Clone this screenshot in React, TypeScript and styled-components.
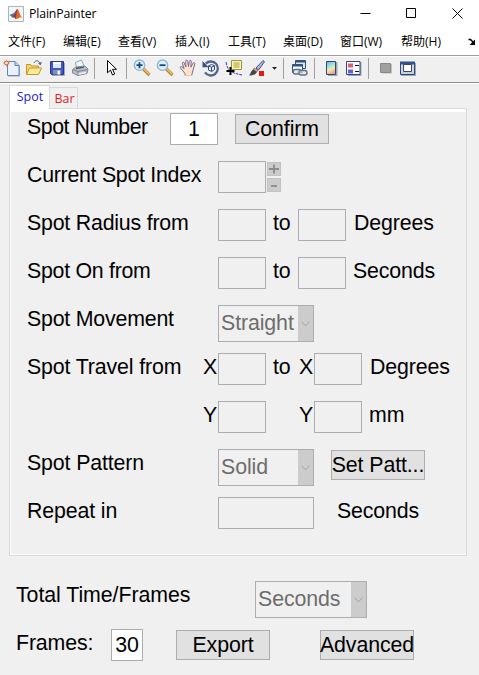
import React from "react";
import styled, { createGlobalStyle, css } from "styled-components";

const GlobalStyle = createGlobalStyle`
  *, *::before, *::after { box-sizing: border-box; }
  html, body { margin: 0; padding: 0; background: #f0f0f0; overflow: hidden; }
`;

const Window = styled.main`
  width: 479px;
  height: 675px;
  background: #f0f0f0;
  color: #000;
  font-family: "Liberation Sans", Arial, sans-serif;
  font-size: 21.33px;
  line-height: 24px;
  overflow: hidden;
`;

const TitleBar = styled.header`
  display: flex;
  align-items: center;
  height: 27px;
  padding-left: 8px;
  background: #fff;
`;

const Title = styled.span`
  flex: 1;
  margin-left: 5px;
  font: 12.3px/16px "Open Sans", "Noto Sans", sans-serif;
  letter-spacing: -0.15px;
  padding-top: 1px;
`;

const WindowControls = styled.div`
  display: flex;
  gap: 35px;
  margin-right: 16px;
`;

const MenuBar = styled.nav`
  display: flex;
  align-items: center;
  height: 28px;
  padding: 2px 0 0 8px;
  background: #fff;
  font: 12px/18px "Open Sans", "Noto Sans CJK SC", sans-serif;
`;

const MenuItem = styled.span<{ $w: number }>`
  width: ${(p) => p.$w}px;
  white-space: nowrap;
`;

const ToolBar = styled.div`
  display: flex;
  align-items: center;
  height: 28px;
  padding-bottom: 2px;
  border-top: 1px solid #a0a0a0;
  border-bottom: 1px solid #8f8f8f;
  background: #f0f0f0;
  box-shadow: inset 0 1px #fff;
`;

const Tool = styled.span<{ $gap?: number; $w?: number }>`
  flex: none;
  display: flex;
  width: ${(p) => p.$w ?? 18}px;
  height: 18px;
  margin-left: ${(p) => p.$gap ?? 5}px;
`;

const Separator = styled.i<{ $gap: number }>`
  flex: none;
  width: 1px;
  height: 21px;
  margin: 1px 0 0 ${(p) => p.$gap}px;
  background: #a0a0a0;
`;

const TabStrip = styled.div`
  display: flex;
  align-items: flex-end;
  height: 25px;
  padding-left: 9px;
  border-top: 1px solid #fff;
  font: 12.5px/16px "Open Sans", "Noto Sans", sans-serif;
`;

const Tab = styled.div<{ $active?: boolean }>`
  border: 1px solid #d9d9d9;
  border-bottom: 0;
  text-align: center;
  ${(p) =>
    p.$active
      ? css`
          z-index: 1;
          width: 41px;
          height: 24px;
          margin-bottom: -1px;
          padding: 3px 0 0 1px;
          background: #fff;
          color: #1d1dc4;
        `
      : css`
          width: 28px;
          height: 21px;
          padding: 3px 0 0 2px;
          border-left: 0;
          color: #e01f1f;
        `}
`;

const Panel = styled.section`
  width: 458px;
  height: 448px;
  margin-left: 9px;
  padding: 1px 0 0 8px;
  border: 1px solid #d9d9d9;
  box-shadow: inset 0 3px #fff, inset 1px 0 #fff, inset 0 -1px #fff;
`;

const Rows = styled.div`
  padding-top: 3px;
`;

const Footer = styled.footer`
  padding: 25px 0 0 7px;
`;

const Row = styled.div`
  display: flex;
  align-items: flex-start;
  height: 48px;
  padding-left: 9px;
`;

const Label = styled.span<{ $w: number; $gap?: number; $tracking?: number }>`
  flex: none;
  width: ${(p) => p.$w}px;
  margin-left: ${(p) => p.$gap ?? 0}px;
  padding-top: 2px;
  letter-spacing: ${(p) => p.$tracking ?? -0.13}px;
  white-space: nowrap;
`;

const Field = styled.div<{ $w?: number; $gap?: number; $active?: boolean }>`
  flex: none;
  width: ${(p) => p.$w ?? 48}px;
  height: 32px;
  margin-left: ${(p) => p.$gap ?? 0}px;
  padding-top: 3px;
  border: 1px solid #abadb3;
  background: ${(p) => (p.$active ? "#fff" : "#f0f0f0")};
  text-align: center;
`;

const Button = styled.button<{ $gap: number }>`
  flex: none;
  width: 94px;
  height: 30px;
  margin: 1px 0 0 ${(p) => p.$gap}px;
  padding: 1px 0 0;
  border: 1px solid #adadad;
  background: #e1e1e1;
  color: #000;
  font: inherit;
  line-height: 26px;
  letter-spacing: -0.1px;
  white-space: nowrap;
  display: flex;
  justify-content: center;
`;

const SelectBox = styled.div<{ $w?: number }>`
  flex: none;
  display: flex;
  justify-content: space-between;
  width: ${(p) => p.$w ?? 96}px;
  height: 37px;
  padding-left: 2px;
  border: 1px solid #abadb3;
  color: #6d6d6d;
  line-height: 34px;
  letter-spacing: -0.1px;
`;

const SelectArrow = styled.span`
  display: flex;
  align-items: center;
  justify-content: center;
  width: 15px;
  background: #ccc;
`;

const Stepper = styled.div`
  display: grid;
  gap: 2px;
  margin: 1px 0 0 1px;
`;

const Step = styled.span`
  display: flex;
  width: 14px;
  height: 14px;
  background: #ccc;
  border: 1px solid #c2c2c2;
`;

function Select({ value, width }: { value: string; width?: number }) {
  return (
    <SelectBox $w={width}>
      <span>{value}</span>
      <SelectArrow>
        <svg width="9" height="6" viewBox="0 0 9 6" fill="none" stroke="#a2a2a2">
          <path d="M.5 .8 4.5 4.7 8.5 .8" />
        </svg>
      </SelectArrow>
    </SelectBox>
  );
}

const Svg = ({ children, w = 18 }: { children: React.ReactNode; w?: number }) => (
  <svg width={w} height="18" viewBox={`0 0 ${w} 18`} fill="none">
    {children}
  </svg>
);

const MatlabIcon = () => (
  <svg width="16" height="16" viewBox="0 0 16 16">
    <path d="M.5 .5h15v15H.5z" fill="#f3f5f6" stroke="#a9b5bd" />
    <path d="M1.5 9 6 7l3-4v6l-4 3z" fill="#3f7fae" />
    <path d="M4.5 10.5 7 7.5l2.3-4.8 1.2 2v7L7.2 13 6 10.7z" fill="#a33322" />
    <path d="M9.3 2.7c1.6 1.6 2.4 6 5 9.2-1.5-1-2.7-1-3.8.4l-2.9 1C8.5 10 8.6 6 9.3 2.7z" fill="#e2682a" />
  </svg>
);

const NewIcon = () => (
  <Svg>
    <path d="M5 3h8l4 4v10.5H5z" fill="#9fb0cc" />
    <path d="M4.5 2.5h7.5l4 4v10h-11.5z" fill="#eaf3fc" stroke="#6684b8" />
    <path d="M12 2.5v4h4" fill="#bdd3f0" stroke="#6684b8" />
    <path d="M3.5 .5v7M0 4h7M1.2 1.7l4.7 4.7M5.9 1.7 1.2 6.4" stroke="#e8a58a" />
    <circle cx="3.5" cy="4" r="1.9" fill="#fff0dc" stroke="#d4552e" />
  </Svg>
);

const OpenIcon = () => (
  <Svg>
    <path d="M1.5 15.5v-10h4l1 1.5h7v3" fill="#f7d468" stroke="#c3952e" />
    <path d="m1.5 15.5 3-6.5h12l-3 6.5z" fill="#ffed96" stroke="#c3952e" />
    <path d="M9 4c1-3 5-3 6 .5" stroke="#526b88" />
    <path d="m13 4 4-1-1.5 3.5z" fill="#526b88" />
  </Svg>
);

const SaveIcon = () => (
  <Svg>
    <path d="M2.5 2.5h13v13h-12l-1-1z" fill="#4356c3" stroke="#28358b" />
    <path d="M5 3h8v6H5z" fill="#d9ebfa" />
    <path d="M5 3h8v2H5z" fill="#fff" />
    <path d="M5 11h8v4.5H5z" fill="#8290b4" />
    <path d="M9.5 11.5h2.5v4H9.5z" fill="#f2f5ff" />
    <path d="M16.5 4v12.5H4" stroke="#9ba9c7" />
  </Svg>
);

const PrintIcon = () => (
  <Svg>
    <path d="M5.5 9 4.5 3.5l6-2.5 3 7" fill="#edf5fb" stroke="#8ea5b8" />
    <path d="M1.5 10.5 5 8l9-1 3 3-1 4.5-9 2-5.5-2.5z" fill="#b9bec7" stroke="#858c98" />
    <path d="m2 10.5 5 2 9.5-2M7 12.5v4" stroke="#7a818d" />
    <path d="m5 9.5 8-1.3" stroke="#47515d" strokeWidth="1.3" />
    <path d="m7.5 15 7.5-1.5" stroke="#eaf3fc" strokeWidth="1.5" />
  </Svg>
);

const CursorIcon = () => (
  <Svg w={12}>
    <path d="M1.5 1.5v12.3l3-2.7 2 4.9 2.2-1-2.1-4.7h3.9z" fill="#fff" stroke="#000" />
  </Svg>
);

const ZoomIcon = ({ plus }: { plus?: boolean }) => (
  <Svg>
    <path d="m10.5 10 6 6" stroke="#b98335" strokeWidth="3.2" />
    <path d="m10.5 9.5 5.8 5.8" stroke="#f5be67" strokeWidth="1.5" />
    <circle cx="6.5" cy="6.2" r="5.2" fill="#d8f1fb" stroke="#8fb8d0" strokeWidth="1.4" />
    <path d={plus ? "M3.5 6.2h6M6.5 3.2v6" : "M3.5 6.2h6"} stroke="#1f4775" strokeWidth="1.8" />
  </Svg>
);

const HandIcon = () => (
  <Svg>
    <path
      d="M6 16.5v-2L1.5 9c-.8-1.3.8-2 1.6-1.2l2 1.8L3.4 4.5c-.3-1.5 1.3-1.8 1.8-.6l1.7 4L6.7 2.2c0-1.4 1.9-1.4 2.1 0l.7 5.3.9-5.3c.3-1.3 2-1 1.9.3l-.4 5.6 2.1-4c.7-1.1 2.2-.4 1.8.8L13.5 13l-.8 3.5"
      fill="#ffe3cc"
      stroke="#665d87"
      strokeWidth=".9"
    />
    <path d="M6 16.5h6.7" stroke="#f2c3a4" />
  </Svg>
);

const RotateIcon = () => (
  <Svg>
    <path d="M3.8 4.6A7 7 0 1 1 3 13.4" stroke="#54658d" strokeWidth="2.3" />
    <path d="M.5 2v6.2h6.2z" fill="#3f5078" />
    <path d="m9.5 5.5 3 1.2v4l-3 1.8-3-1.5V6.9zM6.5 7l3 1.2 3-1.4M9.5 8.2v4" fill="#dff0fa" stroke="#3b4a71" />
  </Svg>
);

const DataCursorIcon = () => (
  <Svg>
    <path d="M1 3c1 5 2 8 6 10s6 2 10 3" stroke="#3737c5" strokeDasharray="3 1" />
    <path d="M6.5 1.5h10v9h-10z" fill="#fbf5a5" stroke="#98904c" />
    <path d="M8.5 4h6M8.5 6h6M8.5 8h6" stroke="#a29b50" />
    <path d="M5.5 8v8M1.5 12h8" stroke="#000" strokeWidth="2" />
  </Svg>
);

const BrushIcon = () => (
  <Svg>
    <path d="m8 9 7-7.5 1.5 1.3L10.5 11z" fill="#aeb9e5" stroke="#404b83" />
    <path d="m6.5 9 3.3 2.5-1 1.7-3.6-2.7z" fill="#d5b36b" stroke="#756047" strokeWidth=".7" />
    <path d="M5.5 10.5 8.7 13c-1 3-4.7 3.5-7.7 3.5 2-1.5 1.5-5 4.5-6z" fill="#45474d" />
    <path d="M11 12h5v5h-5z" fill="#e81717" />
  </Svg>
);

const LinkIcon = () => (
  <Svg>
    <path d="M5.5 1.5h10v8h-10z" fill="#dce9f5" stroke="#34517f" />
    <path d="M5.5 2.5h10" stroke="#34517f" strokeWidth="2" />
    <path d="M2.5 5.5h10v8h-10z" fill="#f5faff" stroke="#34517f" />
    <path d="M2.5 6.5h10" stroke="#34517f" strokeWidth="2" />
    <rect x="3.2" y="10.5" width="8" height="4.5" rx="2.2" fill="#e1e8ee" stroke="#607286" strokeWidth="1.4" />
    <rect x="9" y="11.5" width="8" height="4.5" rx="2.2" fill="#e1e8ee" stroke="#607286" strokeWidth="1.4" />
    <path d="M7.5 13.3h5" stroke="#92a3b3" strokeWidth="1.2" />
  </Svg>
);

const ColorbarIcon = () => (
  <Svg w={12}>
    <defs>
      <linearGradient id="colorbar" x1="0" y1="0" x2=".35" y2="1">
        <stop stopColor="#7f9fe8" />
        <stop offset=".4" stopColor="#9ae4ea" />
        <stop offset=".68" stopColor="#f4eba8" />
        <stop offset="1" stopColor="#f5a58a" />
      </linearGradient>
    </defs>
    <path d="M2 3h9.5v14H2z" fill="#9aa8bd" />
    <path d="M.5 2.5h9v13h-9z" fill="url(#colorbar)" stroke="#304873" />
  </Svg>
);

const LegendIcon = () => (
  <Svg>
    <path d="M3 3h13.5v14H3z" fill="#9aa8bd" />
    <path d="M1.5 2.5h13.5v13H1.5z" fill="#f8fbff" stroke="#304873" />
    <path d="M3 4.5h5v4H3z" fill="#d96468" />
    <path d="M3 10.5h5v4H3z" fill="#6262d3" />
    <path d="M10 6.5h4M10 12.5h4" stroke="#111" />
  </Svg>
);

const HideIcon = () => (
  <Svg w={12}>
    <path d="M2 5h10v9.5H2z" fill="#c2c2c2" />
    <path d="M.5 4.5h10v9H.5z" fill="#a0a0a0" stroke="#898989" />
  </Svg>
);

const DockIcon = () => (
  <Svg>
    <path d="M2 4h15v13H2z" fill="#9aa8bd" />
    <path d="M1.5 3.5h14v12h-14z" fill="#d3d8dd" stroke="#304873" />
    <path d="M1 4h15" stroke="#34528a" strokeWidth="3" />
    <path d="M4.5 5.5h8v7h-8z" fill="#fff" stroke="#304873" />
    <path d="M2 14h13" stroke="#b5babf" strokeDasharray="1 1" />
  </Svg>
);

const MENU: [string, number][] = [
  ["文件(F)", 55],
  ["编辑(E)", 55],
  ["查看(V)", 57],
  ["插入(I)", 53],
  ["工具(T)", 55],
  ["桌面(D)", 57],
  ["窗口(W)", 61],
  ["帮助(H)", 67],
];

export default function App() {
  return (
    <Window>
      <GlobalStyle />
      <TitleBar>
        <MatlabIcon />
        <Title>PlainPainter</Title>
        <WindowControls>
          {["M.5 5.5h10", "M.5 .5h9v9h-9z", "m.5 .5 10 10M10.5 .5l-10 10"].map((d) => (
            <svg key={d} width="11" height="11" viewBox="0 0 11 11" fill="none" stroke="#000">
              <path d={d} />
            </svg>
          ))}
        </WindowControls>
      </TitleBar>
      <MenuBar>
        {MENU.map(([name, w]) => (
          <MenuItem key={name} $w={w}>
            {name}
          </MenuItem>
        ))}
        <svg width="8" height="8" viewBox="0 0 8 8" fill="none">
          <path d="M.5 1.5h2l3 3" stroke="#000" strokeWidth="1.5" />
          <path d="M7 1.5V7H1.5z" fill="#000" />
        </svg>
      </MenuBar>
      <ToolBar>
        <Tool $gap={3}><NewIcon /></Tool>
        <Tool $gap={4}><OpenIcon /></Tool>
        <Tool><SaveIcon /></Tool>
        <Tool><PrintIcon /></Tool>
        <Separator $gap={5} />
        <Tool $gap={11} $w={12}><CursorIcon /></Tool>
        <Separator $gap={8} />
        <Tool $gap={6}><ZoomIcon plus /></Tool>
        <Tool><ZoomIcon /></Tool>
        <Tool><HandIcon /></Tool>
        <Tool><RotateIcon /></Tool>
        <Tool><DataCursorIcon /></Tool>
        <Tool><BrushIcon /></Tool>
        <Tool $gap={6} $w={5}>
          <Svg w={5}><path d="M0 8h5L2.5 10.7z" fill="#222" /></Svg>
        </Tool>
        <Separator $gap={6} />
        <Tool $gap={6}><LinkIcon /></Tool>
        <Separator $gap={6} />
        <Tool $gap={11} $w={12}><ColorbarIcon /></Tool>
        <Tool $gap={7}><LegendIcon /></Tool>
        <Separator $gap={5} />
        <Tool $gap={11} $w={12}><HideIcon /></Tool>
        <Tool $gap={7}><DockIcon /></Tool>
      </ToolBar>

      <TabStrip>
        <Tab $active>Spot</Tab>
        <Tab>Bar</Tab>
      </TabStrip>
      <Panel>
        <Rows>
          <Row>
            <Label $w={143} $tracking={-0.45}>Spot Number</Label>
            <Field $active>1</Field>
            <Button $gap={17}>Confirm</Button>
          </Row>
          <Row>
            <Label $w={191} $tracking={-0.27}>Current Spot Index</Label>
            <Field />
            <Stepper>
              {["M1 6h10M6 1.5v9", "M3 7h6"].map((d) => (
                <Step key={d}>
                  <svg width="12" height="12" viewBox="0 0 12 12" stroke="#8a8a8a" strokeWidth="1.8">
                    <path d={d} />
                  </svg>
                </Step>
              ))}
            </Stepper>
          </Row>
          <Row>
            <Label $w={191} $tracking={-0.2}>Spot Radius from</Label>
            <Field />
            <Label $w={25} $gap={7}>to</Label>
            <Field />
            <Label $w={90} $gap={8}>Degrees</Label>
          </Row>
          <Row>
            <Label $w={191} $tracking={-0.27}>Spot On from</Label>
            <Field />
            <Label $w={25} $gap={7}>to</Label>
            <Field />
            <Label $w={90} $gap={7}>Seconds</Label>
          </Row>
          <Row>
            <Label $w={191} $tracking={-0.2}>Spot Movement</Label>
            <Select value="Straight" />
          </Row>
          <Row>
            <Label $w={176}>Spot Travel from</Label>
            <Label $w={15}>X</Label>
            <Field />
            <Label $w={26} $gap={7}>to</Label>
            <Label $w={15}>X</Label>
            <Field />
            <Label $w={90} $gap={8}>Degrees</Label>
          </Row>
          <Row>
            <Label $w={15} $gap={176}>Y</Label>
            <Field />
            <Label $w={15} $gap={33}>Y</Label>
            <Field />
            <Label $w={40} $gap={7}>mm</Label>
          </Row>
          <Row>
            <Label $w={191}>Spot Pattern</Label>
            <Select value="Solid" />
            <Button $gap={17}>Set Patt...</Button>
          </Row>
          <Row>
            <Label $w={191}>Repeat in</Label>
            <Field $w={96} />
            <Label $w={90} $gap={23}>Seconds</Label>
          </Row>
        </Rows>
      </Panel>
      <Footer>
        <Row>
          <Label $w={239} $tracking={-0.06}>Total Time/Frames</Label>
          <Select value="Seconds" width={112} />
        </Row>
        <Row>
          <Label $w={95}>Frames:</Label>
          <Field $w={32} $active>30</Field>
          <Button $gap={33}>Export</Button>
          <Button $gap={50}>Advanced</Button>
        </Row>
      </Footer>
    </Window>
  );
}
